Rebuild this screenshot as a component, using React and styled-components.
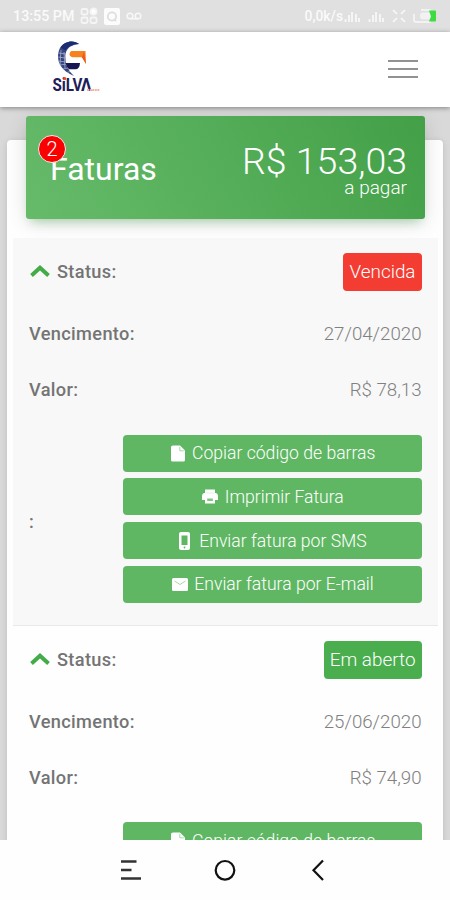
import React from 'react'
import styled, { createGlobalStyle } from 'styled-components'

const FileIcon = () => (
  <svg width="14" height="17" viewBox="0 0 14 17">
    <path d="M2 0.500H9L14 5.500V15Q14 16.500 12.500 16.500H1.500Q0 16.500 0 15V2Q0 0.500 2 0.500Z" fill="#fff" />
    <path d="M8.800 1.800V5.800H12.800" fill="none" stroke="#a9d8ab" strokeWidth="1" />
  </svg>
)

const PrintIcon = () => (
  <svg width="16" height="15" viewBox="0 0 16 15">
    <path d="M3 0.500H13V4H14Q16 4.500 16 7V11H13V14.500H3V11H0V7Q0 4.500 2 4H3Z" fill="#fff" />
    <path d="M5.200 9.500H10.800V12H5.200Z" fill="#7cc57f" />
    <path d="M3.500 4H12.500" stroke="#cfe9d0" strokeWidth=".6" />
  </svg>
)

const PhoneIcon = () => (
  <svg width="11" height="18" viewBox="0 0 11 18">
    <rect width="11" height="18" rx="2" fill="#fff" />
    <rect x="2.500" y="3.500" width="6" height="9.500" fill="#5fb763" />
    <circle cx="5.500" cy="15.500" r=".9" fill="#5fb763" />
  </svg>
)

const MailIcon = () => (
  <svg width="16" height="13" viewBox="0 0 16 13">
    <rect width="16" height="13" rx="1.500" fill="#fff" />
    <path d="M2.500 3L8 6.500L13.500 3" fill="none" stroke="#a9d8ab" strokeWidth="1" />
  </svg>
)

const actions = [
  { text: 'Copiar código de barras', icon: FileIcon, gap: 7.5 },
  { text: 'Imprimir Fatura', icon: PrintIcon, gap: 6.5 },
  { text: 'Enviar fatura por SMS', icon: PhoneIcon, gap: 9 },
  { text: 'Enviar fatura por E-mail', icon: MailIcon, gap: 6 },
]

const invoices = [
  { status: 'Vencida', color: '#f33c32', due: '27/04/2020', value: 'R$ 78,13', shaded: true },
  { status: 'Em aberto', color: '#4aae4e', due: '25/06/2020', value: 'R$ 74,90' },
]

const Logo = () => (
  <svg width="50" height="75" viewBox="51 32 50 75">
    <path d="M79 44C74 39.500 64 41 60 48C56 56 57 69 74 76C68 70 65.500 65 65.500 59C64.500 51 68 45 79 44Z" fill="#36457f" />
    <path d="M79 44C74 39.500 64 41 60.500 47.500L65.500 50.500C68 46.500 72 44.300 79 44Z" fill="#1c2c74" />
    <path d="M58.500 53l7 1M58 57l7 1M58.500 61l7 1M60 65l7-1M63 69l5-1M67 72.500l3-1M61 50l-1 15M64 52l1 16" stroke="#b4bbd2" strokeWidth=".7" />
    <path d="M71.500 51H85.500L86 64L82 57.300H72.500Q69.500 56.500 69.500 54Q69.800 51.500 71.500 51Z" fill="#f5821f" />
    <path d="M84 51.500L86 64L82 57.300Z" fill="#ee5520" />
    <path d="M65.500 63H80Q79.500 69 76 69.200H69Q66.500 67 65.500 63Z" fill="#17184f" />
    <text x="52.500" y="91" textLength="30" lengthAdjust="spacingAndGlyphs" fontFamily="Roboto" fontWeight="700" fontSize="17.500" fill="#1d2059">SiLV</text>
    <text x="81" y="91" textLength="10.500" lengthAdjust="spacingAndGlyphs" fontFamily="Roboto" fontWeight="700" fontSize="17.500" fill="#1d2059">Λ</text>
    <rect x="63.300" y="77.300" width="2.800" height="2.600" fill="#f04a2a" />
    <path d="M87 90H99.500" stroke="#f6b0a2" strokeWidth="2.200" strokeDasharray="2 .6" />
  </svg>
)

const Signal = () => (
  <svg width="17" height="14" viewBox="0 0 17 14">
    <path d="M1.500 10v3M5 6v7M8 3v10M12 5v8M15 9v4" stroke="#f8f8f8" strokeWidth="1.800" />
  </svg>
)

const Invoice = ({ invoice }) => (
  <InvoiceBlock $shaded={invoice.shaded}>
    <StatusRow>
      <Status>
        <svg width="20" height="14" viewBox="0 0 20 14">
          <path d="M1.500 10.500L10 2.800L18.500 10.500" fill="none" stroke="#43ab47" strokeWidth="4" />
        </svg>
        <Label>Status:</Label>
      </Status>
      <StatusTag $color={invoice.color}>{invoice.status}</StatusTag>
    </StatusRow>
    <Row $top={15}>
      <Label>Vencimento:</Label>
      <Value>{invoice.due}</Value>
    </Row>
    <Row>
      <Label>Valor:</Label>
      <Value>{invoice.value}</Value>
    </Row>
    <ActionsRow>
      <Colon>:</Colon>
      <Actions>
        {actions.map(({ text, icon: Icon, gap }) => (
          <ActionButton key={text} $gap={gap}>
            <Icon />
            <span>{text}</span>
          </ActionButton>
        ))}
      </Actions>
    </ActionsRow>
  </InvoiceBlock>
)

const App = () => (
  <Phone>
    <GlobalStyle />
    <StatusBar>
      <StatusGroup>
        <Clock>13:55 PM</Clock>
        <svg width="18" height="18" viewBox="0 0 18 18" fill="none" stroke="#f5f5f5" strokeWidth="1.8">
          <rect x="1.500" y="2" width="6" height="5.500" rx="1.500" />
          <rect x="1.500" y="10.500" width="6" height="5.500" rx="1.500" />
          <rect x="10.500" y="10.500" width="6" height="5.500" rx="1.500" />
          <circle cx="13.500" cy="4.500" r="3" fill="#fff" />
        </svg>
        <svg width="16" height="17" viewBox="0 0 16 17">
          <rect width="16" height="17" rx="2" fill="#fcfcfc" />
          <circle cx="8" cy="8.500" r="4.200" fill="none" stroke="#dedede" strokeWidth="1.800" />
          <path d="M10 11l2 2" stroke="#dedede" strokeWidth="2" />
        </svg>
        <svg width="16" height="10" viewBox="0 0 16 10" fill="none" stroke="#f8f8f8" strokeWidth="1.500">
          <circle cx="4" cy="5" r="2.800" />
          <circle cx="12" cy="5" r="2.800" />
          <path d="M4 7.800h8" />
        </svg>
      </StatusGroup>
      <StatusGroup $right>
        <Speed>0,0k/s</Speed>
        <Signal />
        <Gap />
        <Signal />
        <Gap />
        <svg width="14" height="14" viewBox="0 0 14 14">
          <path d="M1 1l4 4M13 1L9 5M1 13l4-4M13 13L9 9" stroke="#f8f8f8" strokeWidth="1.700" />
        </svg>
        <Gap />
        <svg width="24" height="14" viewBox="0 0 24 14">
          <path d="M1 5v6q0 2 2 2h15M8 1h10" fill="none" stroke="#f8f8f8" strokeWidth="1.500" />
          <rect x="7" y="3.500" width="11" height="7" rx="3" fill="#f2f2f2" />
          <path d="M16 1.500h6q1 0 1 1v9q0 1-1 1h-6l2-5z" fill="#3edb43" />
        </svg>
      </StatusGroup>
    </StatusBar>
    <Header>
      <Logo />
      <MenuButton>
        <MenuLine />
        <MenuLine />
        <MenuLine />
      </MenuButton>
    </Header>
    <Content>
      <Panel>
        <Summary>
          <Heading>
            Faturas
            <Count>2</Count>
          </Heading>
          <Total>
            <Amount>R$ 153,03</Amount>
            <Caption>a pagar</Caption>
          </Total>
        </Summary>
        {invoices.map((invoice) => (
          <Invoice key={invoice.due} invoice={invoice} />
        ))}
      </Panel>
    </Content>
    <NavBar>
      <svg width="22" height="22" viewBox="0 0 22 22">
        <path d="M1 2.500h15.500M1 11h10.500M1 19.500h20" stroke="#333" strokeWidth="2.400" />
      </svg>
      <svg width="22" height="22" viewBox="0 0 22 22">
        <circle cx="11" cy="11.300" r="9.300" fill="none" stroke="#111" strokeWidth="2.200" />
      </svg>
      <svg width="22" height="22" viewBox="0 0 22 22">
        <path d="M15 1.500L5.500 11.300L15 21" fill="none" stroke="#111" strokeWidth="2.200" />
      </svg>
    </NavBar>
  </Phone>
)

export default App

const GlobalStyle = createGlobalStyle`
  * {
    box-sizing: border-box;
  }

  body {
    margin: 0;
    font-family: Roboto, "Liberation Sans", sans-serif;
    font-weight: 300;
  }

  svg {
    display: block;
    flex-shrink: 0;
  }
`

const Phone = styled.div`
  display: flex;
  flex-direction: column;
  width: 450px;
  height: 900px;
  overflow: hidden;
  background: #fefefe;
`

const StatusBar = styled.div`
  display: flex;
  align-items: center;
  justify-content: space-between;
  flex-shrink: 0;
  height: 32px;
  padding: 0 13px;
  background: #e0e0e0;
  color: #fafafa;
`

const StatusGroup = styled.div`
  display: flex;
  align-items: center;
  gap: ${({ $right }) => ($right ? '1px' : '6px')};
`

const Clock = styled.span`
  font-size: 14.3px;
  font-weight: 500;
`

const Speed = styled.span`
  font-size: 13.8px;
  font-weight: 500;
`

const Gap = styled.span`
  width: 5px;
`

const Header = styled.header`
  display: flex;
  align-items: center;
  justify-content: space-between;
  flex-shrink: 0;
  position: relative;
  height: 75px;
  padding: 0 32px 0 51px;
  background: #fff;
  box-shadow: 0 1px 5px rgba(0, 0, 0, 0.4);
`

const MenuButton = styled.div`
  display: flex;
  flex-direction: column;
  gap: 6px;
  width: 30px;
  margin-bottom: 2px;
`

const MenuLine = styled.span`
  height: 2px;
  background: #929292;
`

const Content = styled.main`
  flex: 1;
  min-height: 0;
  overflow: hidden;
  padding: 33px 7px 0;
  background: #d9d9d9;
`

const Panel = styled.section`
  padding: 0 5px 0 6px;
  background: #fefefe;
  border-radius: 4px;
  box-shadow: 0 1px 6px rgba(0, 0, 0, 0.12);
`

const Summary = styled.div`
  display: flex;
  justify-content: space-between;
  position: relative;
  top: -24px;
  height: 103px;
  margin: 0 13px -5px;
  padding: 0 18px 0 24px;
  color: #fff;
  background: linear-gradient(60deg, #66bb6a, #43a047);
  border-radius: 3px;
  box-shadow: 0 4px 20px rgba(0, 0, 0, 0.12), 0 7px 10px -5px rgba(76, 175, 80, 0.4);
`

const Heading = styled.h1`
  position: relative;
  margin: 32px 0 0;
  font-size: 32px;
  line-height: 42px;
  font-weight: 400;
`

const Count = styled.span`
  position: absolute;
  left: -12px;
  top: -13.5px;
  width: 28px;
  height: 28px;
  border: 1.5px solid #eee;
  border-radius: 50%;
  background: #fa0000;
  font-size: 20px;
  line-height: 26px;
  font-weight: 300;
  text-align: center;
`

const Total = styled.div`
  padding-top: 25px;
  text-align: right;
`

const Amount = styled.div`
  font-size: 37.5px;
  line-height: 40px;
`

const Caption = styled.div`
  margin-top: -4px;
  font-size: 19px;
  line-height: 22px;
`

const InvoiceBlock = styled.article`
  height: 387.5px;
  padding: 15px 16.500px 0 16px;
  background: ${({ $shaded }) => ($shaded ? '#f8f8f8' : '#fefefe')};
  border-bottom: 1.500px solid #e8e8e8;
`

const StatusRow = styled.div`
  display: flex;
  align-items: center;
  justify-content: space-between;
  height: 38px;
`

const Status = styled.div`
  display: flex;
  align-items: center;
  gap: 7px;
  padding-left: 1px;
`

const Label = styled.span`
  color: #747474;
  font-size: 18.2px;
  letter-spacing: 0.35px;
  line-height: 24px;
  font-weight: 500;
`

const Colon = styled(Label)`
  padding-top: 6px;
`

const StatusTag = styled.span`
  padding: 0 6px;
  color: #fff;
  background: ${({ $color }) => $color};
  border-radius: 4px;
  font-size: 18.9px;
  line-height: 38px;
`

const Row = styled.div`
  display: flex;
  align-items: center;
  justify-content: space-between;
  height: 56px;
  margin-top: ${({ $top }) => $top || 0}px;
`

const Value = styled.span`
  color: #808080;
  font-size: 18.7px;
`

const ActionsRow = styled.div`
  display: flex;
  align-items: center;
  justify-content: space-between;
  margin-top: 16.500px;
`

const Actions = styled.div`
  display: flex;
  flex-direction: column;
  gap: 6.8px;
  width: 299px;
`

const ActionButton = styled.div`
  display: flex;
  align-items: center;
  justify-content: center;
  gap: ${({ $gap }) => $gap}px;
  height: 37px;
  padding-left: 2px;
  color: #fff;
  background: #5fb763;
  border-radius: 4px;
  font-size: 17.6px;
`

const NavBar = styled.nav`
  display: flex;
  align-items: center;
  justify-content: center;
  gap: 72px;
  flex-shrink: 0;
  height: 60px;
  background: #fefefe;
`
